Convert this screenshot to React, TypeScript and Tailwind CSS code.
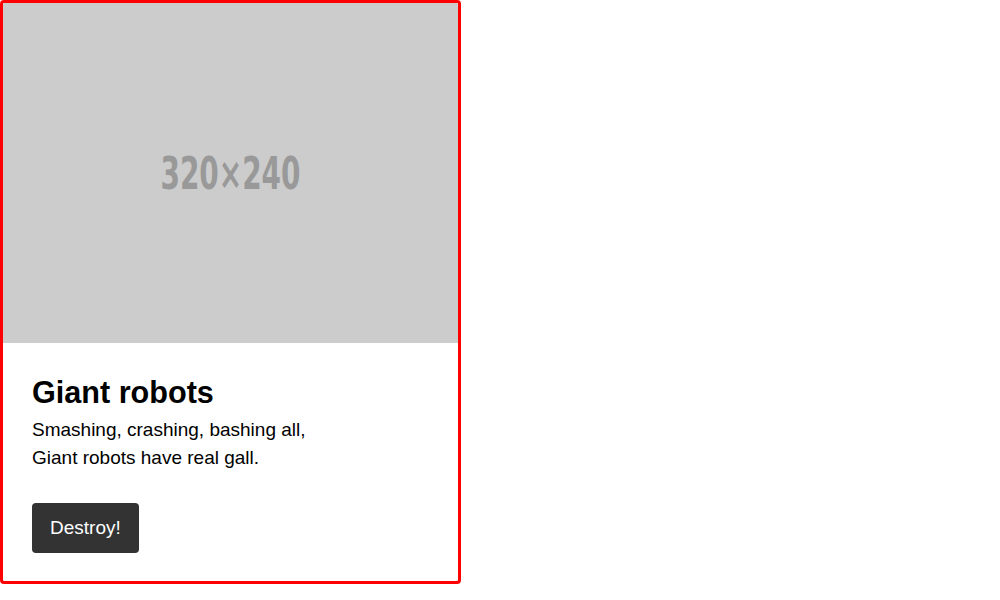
export default function App() {
  return (
    <div className="p-0 bg-white min-h-screen" style={{ fontFamily: '"Liberation Sans", Arial, sans-serif' }}>
      <div className="w-[461px] border-[3px] border-[#ff0000] rounded-[4px] overflow-hidden bg-white">
        <div className="h-[340px] bg-[#cccccc] flex items-center justify-center">
          <span
            className="text-[#999999] text-[45px] font-bold leading-none scale-x-[0.69] inline-block"
            style={{ fontFamily: '"DejaVu Sans Condensed", "DejaVu Sans", sans-serif' }}
          >
            320×240
          </span>
        </div>
        <div className="px-[29px] pt-[31px] pb-[28px] text-black">
          <h2 className="text-[30.6px] leading-[36px] font-bold">Giant robots</h2>
          <p className="mt-[6px] text-[19px] leading-[28px]">
            Smashing, crashing, bashing all,
            <br />
            Giant robots have real gall.
          </p>
          <button className="mt-[31px] h-[50px] px-[18px] bg-[#333333] text-white text-[19px] rounded-[4px]">
            Destroy!
          </button>
        </div>
      </div>
    </div>
  );
}
